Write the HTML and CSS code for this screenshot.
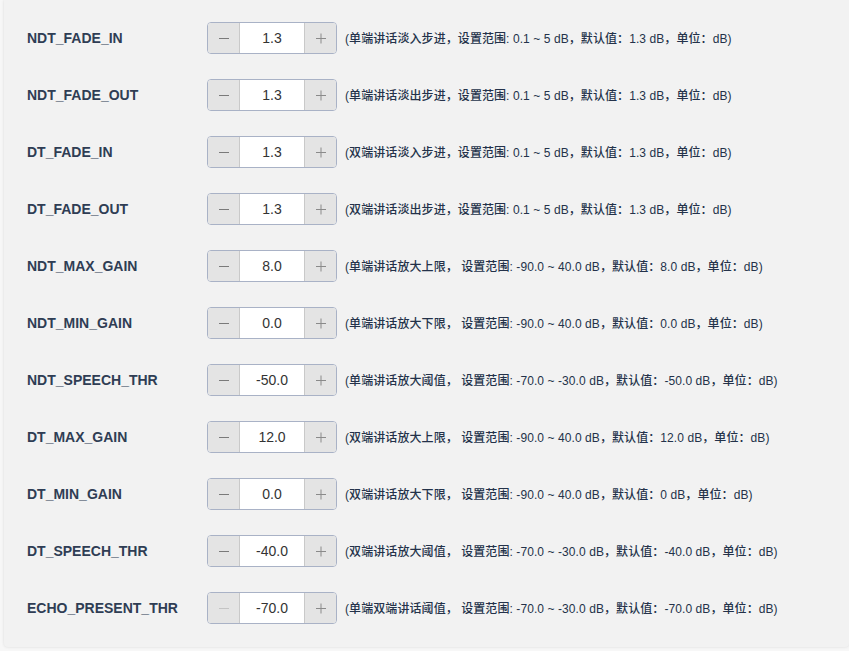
FILE: index.html
```html
<!DOCTYPE html>
<html lang="zh">
<head>
<meta charset="utf-8">
<title>AGC</title>
<link rel="stylesheet" href="styles.css">
</head>
<body>
<div class="panel">
  <div class="row"><div class="label">NDT_FADE_IN</div><div class="stepper"><span class="btn minus"><svg width="12" height="12" viewBox="0 0 12 12"><path d="M1 6.5H11" stroke="#7a7a7a" stroke-width="1.2"/></svg></span><span class="val">1.3</span><span class="btn plus"><svg width="12" height="12" viewBox="0 0 12 12"><path d="M1 6.5H11M6 1.5V11.5" stroke="#8a8a8a" stroke-width="1"/></svg></span></div><div class="desc">(单端讲话淡入步进，设置范围: 0.1 ~ 5 dB，默认值：1.3 dB，单位：dB)</div></div>
  <div class="row"><div class="label">NDT_FADE_OUT</div><div class="stepper"><span class="btn minus"><svg width="12" height="12" viewBox="0 0 12 12"><path d="M1 6.5H11" stroke="#7a7a7a" stroke-width="1.2"/></svg></span><span class="val">1.3</span><span class="btn plus"><svg width="12" height="12" viewBox="0 0 12 12"><path d="M1 6.5H11M6 1.5V11.5" stroke="#8a8a8a" stroke-width="1"/></svg></span></div><div class="desc">(单端讲话淡出步进，设置范围: 0.1 ~ 5 dB，默认值：1.3 dB，单位：dB)</div></div>
  <div class="row"><div class="label">DT_FADE_IN</div><div class="stepper"><span class="btn minus"><svg width="12" height="12" viewBox="0 0 12 12"><path d="M1 6.5H11" stroke="#7a7a7a" stroke-width="1.2"/></svg></span><span class="val">1.3</span><span class="btn plus"><svg width="12" height="12" viewBox="0 0 12 12"><path d="M1 6.5H11M6 1.5V11.5" stroke="#8a8a8a" stroke-width="1"/></svg></span></div><div class="desc">(双端讲话淡入步进，设置范围: 0.1 ~ 5 dB，默认值：1.3 dB，单位：dB)</div></div>
  <div class="row"><div class="label">DT_FADE_OUT</div><div class="stepper"><span class="btn minus"><svg width="12" height="12" viewBox="0 0 12 12"><path d="M1 6.5H11" stroke="#7a7a7a" stroke-width="1.2"/></svg></span><span class="val">1.3</span><span class="btn plus"><svg width="12" height="12" viewBox="0 0 12 12"><path d="M1 6.5H11M6 1.5V11.5" stroke="#8a8a8a" stroke-width="1"/></svg></span></div><div class="desc">(双端讲话淡出步进，设置范围: 0.1 ~ 5 dB，默认值：1.3 dB，单位：dB)</div></div>
  <div class="row"><div class="label">NDT_MAX_GAIN</div><div class="stepper"><span class="btn minus"><svg width="12" height="12" viewBox="0 0 12 12"><path d="M1 6.5H11" stroke="#7a7a7a" stroke-width="1.2"/></svg></span><span class="val">8.0</span><span class="btn plus"><svg width="12" height="12" viewBox="0 0 12 12"><path d="M1 6.5H11M6 1.5V11.5" stroke="#8a8a8a" stroke-width="1"/></svg></span></div><div class="desc">(单端讲话放大上限， 设置范围: -90.0 ~ 40.0 dB，默认值：8.0 dB，单位：dB)</div></div>
  <div class="row"><div class="label">NDT_MIN_GAIN</div><div class="stepper"><span class="btn minus"><svg width="12" height="12" viewBox="0 0 12 12"><path d="M1 6.5H11" stroke="#7a7a7a" stroke-width="1.2"/></svg></span><span class="val">0.0</span><span class="btn plus"><svg width="12" height="12" viewBox="0 0 12 12"><path d="M1 6.5H11M6 1.5V11.5" stroke="#8a8a8a" stroke-width="1"/></svg></span></div><div class="desc">(单端讲话放大下限， 设置范围: -90.0 ~ 40.0 dB，默认值：0.0 dB，单位：dB)</div></div>
  <div class="row"><div class="label">NDT_SPEECH_THR</div><div class="stepper"><span class="btn minus"><svg width="12" height="12" viewBox="0 0 12 12"><path d="M1 6.5H11" stroke="#7a7a7a" stroke-width="1.2"/></svg></span><span class="val">-50.0</span><span class="btn plus"><svg width="12" height="12" viewBox="0 0 12 12"><path d="M1 6.5H11M6 1.5V11.5" stroke="#8a8a8a" stroke-width="1"/></svg></span></div><div class="desc">(单端讲话放大阈值， 设置范围: -70.0 ~ -30.0 dB，默认值：-50.0 dB，单位：dB)</div></div>
  <div class="row"><div class="label">DT_MAX_GAIN</div><div class="stepper"><span class="btn minus"><svg width="12" height="12" viewBox="0 0 12 12"><path d="M1 6.5H11" stroke="#7a7a7a" stroke-width="1.2"/></svg></span><span class="val">12.0</span><span class="btn plus"><svg width="12" height="12" viewBox="0 0 12 12"><path d="M1 6.5H11M6 1.5V11.5" stroke="#8a8a8a" stroke-width="1"/></svg></span></div><div class="desc">(双端讲话放大上限， 设置范围: -90.0 ~ 40.0 dB，默认值：12.0 dB，单位：dB)</div></div>
  <div class="row"><div class="label">DT_MIN_GAIN</div><div class="stepper"><span class="btn minus"><svg width="12" height="12" viewBox="0 0 12 12"><path d="M1 6.5H11" stroke="#7a7a7a" stroke-width="1.2"/></svg></span><span class="val">0.0</span><span class="btn plus"><svg width="12" height="12" viewBox="0 0 12 12"><path d="M1 6.5H11M6 1.5V11.5" stroke="#8a8a8a" stroke-width="1"/></svg></span></div><div class="desc">(双端讲话放大下限， 设置范围: -90.0 ~ 40.0 dB，默认值：0 dB，单位：dB)</div></div>
  <div class="row"><div class="label">DT_SPEECH_THR</div><div class="stepper"><span class="btn minus"><svg width="12" height="12" viewBox="0 0 12 12"><path d="M1 6.5H11" stroke="#7a7a7a" stroke-width="1.2"/></svg></span><span class="val">-40.0</span><span class="btn plus"><svg width="12" height="12" viewBox="0 0 12 12"><path d="M1 6.5H11M6 1.5V11.5" stroke="#8a8a8a" stroke-width="1"/></svg></span></div><div class="desc">(双端讲话放大阈值， 设置范围: -70.0 ~ -30.0 dB，默认值：-40.0 dB，单位：dB)</div></div>
  <div class="row"><div class="label">ECHO_PRESENT_THR</div><div class="stepper"><span class="btn minus disabled"><svg width="12" height="12" viewBox="0 0 12 12"><path d="M1 6.5H11" stroke="#c4c4c4" stroke-width="1.2"/></svg></span><span class="val">-70.0</span><span class="btn plus"><svg width="12" height="12" viewBox="0 0 12 12"><path d="M1 6.5H11M6 1.5V11.5" stroke="#8a8a8a" stroke-width="1"/></svg></span></div><div class="desc">(单端双端讲话阈值， 设置范围: -70.0 ~ -30.0 dB，默认值：-70.0 dB，单位：dB)</div></div>
</div>
</body>
</html>
```
FILE: styles.css
```css
html, body {
  margin: 0;
  padding: 0;
}
body {
  background: #f7f7f7;
  font-family: "Liberation Sans", Arial, "Noto Sans CJK SC", sans-serif;
  color: #2f3d54;
  height: 651px;
  overflow: hidden;
}
.panel {
  margin-left: 4px;
  background: #f2f2f2;
  border-radius: 0 0 4px 4px;
  box-shadow: 0 0 3px rgba(0, 0, 0, 0.12);
  padding: 22px 0 23px 23px;
  display: flex;
  flex-direction: column;
  gap: 25px;
}
.row {
  display: flex;
  align-items: center;
  height: 32px;
}
.label {
  width: 180px;
  font-size: 14px;
  font-weight: bold;
  color: #2f3d54;
  margin-top: -1px;
}
.stepper {
  display: flex;
  width: 128px;
  height: 30px;
  border: 1px solid #a9b2c6;
  border-radius: 4px;
  background: #fff;
  overflow: hidden;
}
.btn {
  width: 31px;
  background: #e4e4e4;
  display: flex;
  align-items: center;
  justify-content: center;
}
.btn svg {
  display: block;
}
.minus {
  border-right: 1px solid #c9c9c9;
}
.plus {
  border-left: 1px solid #c9c9c9;
}
.val {
  flex: 1;
  display: flex;
  align-items: center;
  justify-content: center;
  font-size: 14px;
  color: #333;
  margin-top: -1px;
}
.desc {
  margin-left: 8px;
  font-size: 12px;
  font-weight: 500;
  color: #24324a;
  white-space: nowrap;
  letter-spacing: 0.08px;
  margin-top: -1px;
}
```
